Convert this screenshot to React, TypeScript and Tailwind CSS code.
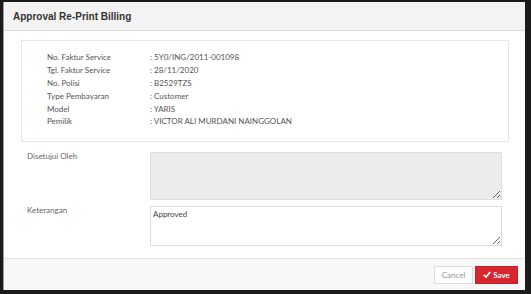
import React from 'react';

const INFO = [
  ['No. Faktur Service', '5Y0/ING/2011-001098'],
  ['Tgl. Faktur Service', '28/11/2020'],
  ['No. Polisi', 'B2529TZS'],
  ['Type Pembayaran', 'Customer'],
  ['Model', 'YARIS'],
  ['Pemilik', 'VICTOR ALI MURDANI NAINGGOLAN'],
];

export default function App() {
  return (
    <div className="w-[531px] h-[294px] bg-[#1b1b1b] pt-[2px] pl-[3px] pr-[6px] pb-[4px] flex" style={{ fontFamily: 'Lato, "Open Sans", sans-serif' }}>
      <div className="flex-1 flex flex-col bg-white border-l border-[#9a9a9a]">
        {/* header */}
        <div className="h-[29px] shrink-0 bg-[#f3f3f3] border-b border-[#dadada] flex items-center pl-[9px]">
          <h1 className="text-[10px] font-bold text-[#333]" style={{ fontFamily: '"Liberation Sans", Arial, sans-serif' }}>Approval Re-Print Billing</h1>
        </div>

        {/* body */}
        <div className="flex-1 flex flex-col pt-[9px]">
          <div className="ml-[17px] mr-[16px] h-[102px] border border-[#e6e6e6] pl-[25px] pt-[10px] flex flex-col">
            {INFO.map(([k, v]) => (
              <div key={k} className="flex h-[12.8px] items-center text-[8px] text-[#555]">
                <span className="w-[103px] shrink-0">{k}</span>
                <span>: {v}</span>
              </div>
            ))}
          </div>

          <div className="flex flex-col gap-[4px] mt-[8px] pl-[23px] pr-[23px]">
            <div className="flex items-start">
              <label className="w-[123px] shrink-0 text-[8px] leading-[12px] text-[#666]">Disetujui Oleh</label>
              <textarea disabled className="flex-1 mt-[2px] h-[48px] bg-[#ececec] border border-[#dedede] outline-none resize-y" />
            </div>
            <div className="flex items-start">
              <label className="w-[123px] shrink-0 text-[8px] leading-[12px] text-[#666]">Keterangan</label>
              <textarea
                defaultValue="Approved"
                className="flex-1 mt-[2px] h-[40px] bg-white border border-[#dedede] outline-none px-[2px] py-[1px] text-[8px] text-[#444] resize-y"
                style={{ fontFamily: 'Lato, sans-serif' }}
              />
            </div>
          </div>
        </div>

        {/* footer */}
        <div className="h-[32px] shrink-0 bg-[#f7f8fa] border-t border-[#e3e3e3] flex items-center justify-end gap-[2px] pr-[7px]">
          <button className="w-[39px] h-[18px] bg-white border border-[#dcdcdc] text-[8px] text-[#999]">Cancel</button>
          <button className="w-[43px] h-[18px] bg-[#d7262f] border border-[#c81f28] text-[8px] font-bold text-white flex items-center justify-center gap-[2px]">
            <svg width="8" height="7" viewBox="0 0 16 14">
              <path d="M1.5 7.5 L6 12 L14.5 2" fill="none" stroke="white" strokeWidth="3.4" />
            </svg>
            Save
          </button>
        </div>
      </div>
    </div>
  );
}
